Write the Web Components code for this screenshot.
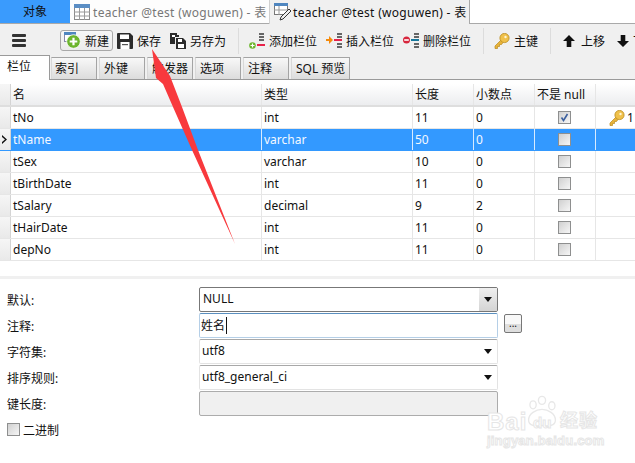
<!DOCTYPE html>
<html>
<head>
<meta charset="utf-8">
<style>
  html, body { margin: 0; height: 463px; overflow: hidden; background: #fff; }
  body { position: relative; font: 12px "Noto Sans", "Noto Sans CJK SC", sans-serif; color: #111; }
</style>
</head>
<body>
<nav-tabs></nav-tabs>
<tool-bar></tool-bar>
<sub-tabs></sub-tabs>
<field-grid></field-grid>
<field-form></field-form>
<red-arrow></red-arrow>
<baidu-mark></baidu-mark>

<script>
const FONT = '"Noto Sans", "Noto Sans CJK SC", sans-serif';

const ICONS = {
  table: `<svg width="16" height="16" viewBox="0 0 16 16"><rect x=".5" y=".5" width="15" height="15" fill="#fff" stroke="#8a8a8a"/><rect x="0" y="0" width="16" height="4" fill="#5b8ec4"/><path d="M0 8h16M0 12h16M5.5 4v12M10.5 4v12" stroke="#9a9a9a"/></svg>`,
  tableEdit: `<svg width="18" height="18" viewBox="0 0 18 18"><rect x=".5" y=".5" width="13" height="11" fill="#fff" stroke="#777"/><rect x="0" y="0" width="14" height="3" fill="#4f86bf"/><path d="M0 7h14M5 3v9" stroke="#999"/><path d="M15 6l2 2-8 8-3 1 1-3z" fill="#eee" stroke="#333"/></svg>`,
  menu: `<svg width="14" height="13" viewBox="0 0 14 13"><g fill="#333"><rect width="14" height="3" rx="1"/><rect y="5" width="14" height="3" rx="1"/><rect y="10" width="14" height="3" rx="1"/></g></svg>`,
  add: `<svg width="17" height="17" viewBox="0 0 17 17"><rect x=".5" y=".5" width="11" height="9" fill="#fff" stroke="#88a"/><rect width="12" height="3" fill="#4f86bf"/><circle cx="9.5" cy="9.5" r="6.8" fill="#6cb52d" stroke="#fff" stroke-width=".8"/><path d="M9.5 5.7v7.6M5.7 9.5h7.6" stroke="#fff" stroke-width="2.2"/></svg>`,
  save: `<svg width="16" height="16" viewBox="0 0 16 16"><path d="M1 0h12l3 3v12a1 1 0 0 1-1 1H1a1 1 0 0 1-1-1V1a1 1 0 0 1 1-1z" fill="#2b2b2b"/><rect x="3" y="1.5" width="9" height="4.5" fill="#fff"/><rect x="3.5" y="9" width="9" height="7" fill="#fff"/><rect x="5" y="11" width="6" height="1.2" fill="#555"/></svg>`,
  saveAs: `<svg width="16" height="16" viewBox="0 0 16 16"><path d="M0 0h7v2h2v2H5v7H0z" fill="#2b2b2b"/><rect x="2" y="2" width="3" height="2" fill="#fff"/><path d="M6 5h7l3 3v8H6z" fill="#2b2b2b"/><rect x="8" y="6" width="4" height="3" fill="#fff"/><rect x="8" y="11" width="6" height="4" fill="#fff"/></svg>`,
  colAdd: `<svg width="16" height="16" viewBox="0 0 16 16"><g fill="#666"><rect x="10" y="0" width="5" height="2"/><rect x="10" y="3" width="5" height="2"/><rect x="10" y="6" width="5" height="2"/></g><rect x="8" y="11" width="8" height="2" fill="#e8224a"/><circle cx="3.5" cy="12.5" r="3.3" fill="#6cb52d"/><path d="M3.5 10.5v4M1.5 12.5h4" stroke="#fff" stroke-width="1.2"/></svg>`,
  colInsert: `<svg width="16" height="16" viewBox="0 0 16 16"><g fill="#666"><rect x="11" y="0" width="5" height="2"/><rect x="11" y="3" width="5" height="2"/><rect x="11" y="10" width="5" height="2"/><rect x="11" y="13" width="5" height="2"/></g><rect x="8" y="6" width="8" height="2" fill="#e8224a"/><path d="M0 6h3V3l4 4-4 4V8H0z" fill="#f58a0b"/></svg>`,
  colDel: `<svg width="16" height="16" viewBox="0 0 16 16"><g fill="#666"><rect x="11" y="0" width="5" height="2"/><rect x="11" y="3" width="5" height="2"/><rect x="11" y="10" width="5" height="2"/><rect x="11" y="13" width="5" height="2"/></g><rect x="8" y="6" width="8" height="2" fill="#17779b"/><circle cx="3.5" cy="7" r="3.5" fill="#d7263d"/><rect x="1.2" y="6.2" width="4.6" height="1.6" fill="#fff"/></svg>`,
  key: `<svg width="16" height="16" viewBox="0 0 16 16"><path d="M7.5 6.5L1 13v2.5h2.5v-2h2v-2h2l1.5-2" fill="#e8b33a" stroke="#b98a1c" stroke-width=".7"/><circle cx="10.5" cy="5" r="4.6" fill="#f0c14b" stroke="#b98a1c" stroke-width=".8"/><circle cx="11.5" cy="4" r="1.2" fill="#fff6d5"/></svg>`,
  up: `<svg width="12" height="12" viewBox="0 0 12 12"><path d="M6 0l6 6H8.3v6H3.7V6H0z" fill="#111"/></svg>`,
  down: `<svg width="12" height="12" viewBox="0 0 12 12"><path d="M6 12L0 6h3.7V0h4.6v6H12z" fill="#111"/></svg>`,
};

class NavTabs extends HTMLElement {
  constructor() {
    super();
    this.attachShadow({ mode: 'open' }).innerHTML = `
      <style>
        :host { display: flex; height: 24px; box-sizing: border-box; border-bottom: 1px solid #a9a9a9; background: #fff; font-family: ${FONT}; }
        div { display: flex; align-items: center; box-sizing: border-box; height: 23px; white-space: nowrap; }
        span { letter-spacing: .3px; }
        .obj { width: 70px; background: #3a9bfd; justify-content: center; color: #111; padding-bottom: 2px; }
        .idle { width: 199px; padding-left: 4px; gap: 3px; color: #777; background: #fdfdfd; }
        .cur { width: 201px; height: 24px; padding-left: 4px; gap: 1px; background: #f0f0f0; color: #111; border-right: 1px solid #a9a9a9; border-left: 1px solid #d0d0d0; }
      </style>
      <div class="obj">对象</div>
      <div class="idle">${ICONS.table}<span>teacher @test (woguwen) - 表</span></div>
      <div class="cur">${ICONS.tableEdit}<span>teacher @test (woguwen) - 表</span></div>`;
  }
}

class ToolBtn extends HTMLElement {
  constructor() {
    super();
    this.attachShadow({ mode: 'open' }).innerHTML = `
      <style>
        :host { display: flex; align-items: center; gap: 4px; height: 21px; white-space: nowrap; flex: none; }
        :host([on]) { box-sizing: border-box; border: 1px solid #a8a8a8; border-radius: 3px; background: linear-gradient(#f7f7f7, #ebebeb); padding: 0 3px; }
        svg { display: block; }
      </style>
      <span id="ic" style="display:contents"></span><slot></slot>`;
  }
  connectedCallback() {
    this.shadowRoot.getElementById('ic').innerHTML = ICONS[this.getAttribute('icon')] || '';
  }
}

class ToolBar extends HTMLElement {
  constructor() {
    super();
    this.attachShadow({ mode: 'open' }).innerHTML = `
      <style>
        :host { display: flex; align-items: center; height: 31px; box-sizing: border-box; padding: 2px 0 0 12px; background: #f0f0f0; overflow: hidden; font-family: ${FONT}; }
        .menu { margin-right: 34px; display: flex; }
        .sep { width: 1px; height: 26px; background: #dcdcdc; flex: none; }
      </style>
      <span class="menu">${ICONS.menu}</span>
      <tool-btn icon="add" on style="width:53px">新建</tool-btn>
      <tool-btn icon="save" style="margin-left:4px">保存</tool-btn>
      <tool-btn icon="saveAs" style="margin-left:9px">另存为</tool-btn>
      <span class="sep" style="margin-left:12px"></span>
      <tool-btn icon="colAdd" style="margin-left:10px">添加栏位</tool-btn>
      <tool-btn icon="colInsert" style="margin-left:9px">插入栏位</tool-btn>
      <tool-btn icon="colDel" style="margin-left:9px">删除栏位</tool-btn>
      <span class="sep" style="margin-left:12px"></span>
      <tool-btn icon="key" style="margin-left:10px">主键</tool-btn>
      <span class="sep" style="margin-left:12px"></span>
      <tool-btn icon="up" style="margin-left:12px;gap:6px">上移</tool-btn>
      <tool-btn icon="down" style="margin-left:12px;gap:4px">下移</tool-btn>`;
  }
}

class SubTabs extends HTMLElement {
  constructor() {
    super();
    const tabs = ['索引', '外键', '触发器', '选项', '注释', 'SQL 预览'];
    this.attachShadow({ mode: 'open' }).innerHTML = `
      <style>
        :host { display: flex; gap: 2px; height: 25px; box-sizing: border-box; background: #f0f0f0; border-bottom: 1px solid #9a9a9a; font-family: ${FONT}; }
        div { box-sizing: border-box; width: 46px; height: 22px; margin-top: 2px; line-height: 21px; padding-left: 4px; white-space: nowrap;
              border: 1px solid #a4a4a4; border-bottom: 0; border-left-color: #d8d8d8; background: linear-gradient(#f8f8f8, #dcdcdc); }
        .on { width: 50px; height: 25px; margin: 0 -1px 0 0; padding-left: 7px; background: #fff; border: 1px solid #9a9a9a; border-width: 1px 1px 0 0; line-height: 22px; position: relative; }
        .idx { padding-left: 3px; }
        .sql { width: 59px; }
      </style>
      <div class="on">栏位</div>
      ${tabs.map((t, i) => `<div class="${t.startsWith('SQL') ? 'sql' : ''} ${i === 0 ? 'idx' : ''}">${t}</div>`).join('')}`;
  }
}

class FieldGrid extends HTMLElement {
  constructor() {
    super();
    const filas = [
      ['tNo', 'int', '11', '0', true, true],
      ['tName', 'varchar', '50', '0'],
      ['tSex', 'varchar', '10', '0'],
      ['tBirthDate', 'int', '11', '0'],
      ['tSalary', 'decimal', '9', '2'],
      ['tHairDate', 'int', '11', '0'],
      ['depNo', 'int', '11', '0'],
    ];
    const check = (on) => `<i class="chk">${on ? '<svg width="9" height="9" viewBox="0 0 9 9"><path d="M1.5 4.5l2 3 4-6.5" fill="none" stroke="#3b5f9e" stroke-width="1.6"/></svg>' : ''}</i>`;
    this.attachShadow({ mode: 'open' }).innerHTML = `
      <style>
        :host { display: block; padding-top: 4px; background: #fff; font-family: ${FONT}; }
        .r { display: grid; grid-template-columns: 11px 251px 151px 61px 61px 61px 1fr; height: 22px; box-sizing: border-box; border-bottom: 1px solid #e6e6e6; }
        .r > div { box-sizing: border-box; padding-left: 2px; line-height: 21px; border-right: 1px solid #e6e6e6; white-space: nowrap; overflow: hidden; }
        .r > div:last-child { border-right: 0; }
        .r > .h { padding: 0; background: linear-gradient(#f6f6f6, #e9e9e9); border-right: 1px solid #d4d4d4; position: relative; }
        .head { height: 23px; background: linear-gradient(#fff, #ecedef); border-bottom: 2px solid #dedede; }
        .head > div { line-height: 22px; }
        .sel { background: #3399ff; color: #f4f8ff; border-bottom-color: #3399ff; }
        .sel > div { border-right-color: #d8ebff; }
        .sel > .h { color: #111; }
        .c { display: flex; align-items: center; justify-content: center; padding: 0 2px 0 0 !important; }
        .chk { display: flex; align-items: center; justify-content: center; box-sizing: border-box; width: 13px; height: 13px; border: 1px solid #8e8f8f; background: linear-gradient(135deg, #d0d0d0, #f6f6f6); }
        .k { display: flex; align-items: center; padding-left: 13px !important; gap: 2px; }
        .arrow { position: absolute; left: 1px; top: 6px; }
      </style>
      <div class="r head"><div class="h"></div><div>名</div><div>类型</div><div>长度</div><div>小数点</div><div>不是 null</div><div></div></div>
      ${filas.map((f, i) => `
        <div class="r ${i === 1 ? 'sel' : ''}">
          <div class="h">${i === 1 ? '<svg class="arrow" width="7" height="9" viewBox="0 0 7 9"><path d="M1 0l5 4.5L1 9V7l3-2.5L1 2z" fill="#111"/></svg>' : ''}</div>
          <div>${f[0]}</div><div>${f[1]}</div><div>${f[2]}</div><div>${f[3]}</div>
          <div class="c">${check(f[4])}</div>
          <div class="${f[5] ? 'k' : ''}">${f[5] ? ICONS.key + '<span>1</span>' : ''}</div>
        </div>`).join('')}`;
  }
}

class FormRow extends HTMLElement {
  constructor() {
    super();
    this.attachShadow({ mode: 'open' }).innerHTML = `
      <style>
        :host { display: grid; grid-template-columns: 192px 299px auto; height: 25px; margin-bottom: 1px; align-items: center; font-family: ${FONT}; }
        .box { box-sizing: border-box; height: 25px; border: 1px solid #acacac; border-color: #a8a8a8 #e3e3e3 #e3e3e3; border-radius: 2px; padding-left: 2px; line-height: 22px; position: relative; background: #fff; }
        :host([kind="drop"]) .box { border: 1.5px solid #777; padding-left: 3px; }
        :host([kind="focus"]) .box { border-color: #5a8fbf #b5cfe7 #b5cfe7; padding-left: 1px; line-height: 23px; }
        :host([kind="off"]) .box { background: #f0f0f0; border: 1px solid #acacac; }
        .btn { display: none; position: absolute; right: 0; top: 0; bottom: 0; width: 18px; }
        :host([arrow]) .btn { display: block; }
        :host([kind="drop"]) .btn { background: linear-gradient(#efefef, #d4d4d4); }
        .btn::after { content: ""; position: absolute; left: 5px; top: 9px; border: 4px solid transparent; border-top: 5px solid #111; border-bottom: 0; }
        .more { display: none; box-sizing: border-box; width: 18px; height: 19px; margin: -4px 0 0 6px; border: 1px solid #777; border-radius: 2px; background: linear-gradient(#f8f8f8 50%, #dedede 50%); font-size: 10px; line-height: 16px; text-align: center; }
        :host([more]) .more { display: block; }
        .caret { border-left: 1px solid #111; margin-left: 1px; }
      </style>
      <span><slot name="label"></slot></span>
      <div class="box"><slot></slot><span class="caret" id="c" hidden></span><i class="btn"></i></div>
      <div class="more">...</div>`;
  }
  connectedCallback() {
    if (this.hasAttribute('more')) this.shadowRoot.getElementById('c').hidden = false;
  }
}

class FieldForm extends HTMLElement {
  constructor() {
    super();
    this.attachShadow({ mode: 'open' }).innerHTML = `
      <style>
        :host { display: block; margin-top: 15px; border-top: 3px solid #f0f0f0; padding: 8px 0 0 7px; font-family: ${FONT}; }
        .bin { display: flex; align-items: center; gap: 3px; height: 15px; margin-top: 6px; }
        .bin i { box-sizing: border-box; width: 13px; height: 13px; border: 1px solid #8e8f8f; background: linear-gradient(135deg, #d0d0d0, #f6f6f6); }
      </style>
      <form-row kind="drop" arrow><span slot="label">默认:</span>NULL</form-row>
      <form-row kind="focus" more><span slot="label">注释:</span>姓名</form-row>
      <form-row arrow><span slot="label">字符集:</span>utf8</form-row>
      <form-row arrow><span slot="label">排序规则:</span>utf8_general_ci</form-row>
      <form-row kind="off"><span slot="label">键长度:</span></form-row>
      <div class="bin"><i></i>二进制</div>`;
  }
}

// flecha roja dibujada encima de la captura
class RedArrow extends HTMLElement {
  constructor() {
    super();
    this.attachShadow({ mode: 'open' }).innerHTML = `
      <style>:host { position: absolute; left: 0; top: 0; pointer-events: none; }</style>
      <svg width="635" height="463" style="display:block">
        <path d="M152 49L170 76 182 107 198 150 235 244 192 150 173 107 163 84 156 78z" fill="#f8393d"/>
      </svg>`;
  }
}

class BaiduMark extends HTMLElement {
  constructor() {
    super();
    this.attachShadow({ mode: 'open' }).innerHTML = `
      <style>
        :host { position: absolute; left: 487px; top: 394px; width: 120px; height: 58px; color: #fff; font-family: "Liberation Sans", "Noto Sans CJK SC", sans-serif; pointer-events: none; }
        span { position: absolute; white-space: nowrap; font-weight: bold; line-height: 1; -webkit-text-stroke: 1px #e6e6e6; }
        svg { position: absolute; left: 38px; top: 0; }
      </style>
      <svg width="34" height="36" viewBox="0 0 38 36"><g fill="none" stroke="#e8e8e8" stroke-width="1.5"><ellipse cx="9" cy="10" rx="3.5" ry="4.5"/><ellipse cx="19" cy="5" rx="4" ry="4.5"/><ellipse cx="30" cy="11" rx="3.5" ry="4.5"/><path d="M4 27c0-7 8-12 15-12s15 5 15 12c0 7-8 7-15 6-7 1-15 1-15-6z"/></g></svg>
      <span style="left:0;top:16px;font-size:24px;letter-spacing:1px">Bai</span>
      <span style="left:46px;top:21px;font-size:15px">du</span>
      <span style="left:73px;top:18px;font-size:18px;letter-spacing:1px">经验</span>
      <span style="left:0;top:40px;font-size:13px;letter-spacing:.2px">jingyan.baidu.com</span>`;
  }
}

customElements.define('nav-tabs', NavTabs);
customElements.define('tool-btn', ToolBtn);
customElements.define('tool-bar', ToolBar);
customElements.define('sub-tabs', SubTabs);
customElements.define('field-grid', FieldGrid);
customElements.define('form-row', FormRow);
customElements.define('field-form', FieldForm);
customElements.define('red-arrow', RedArrow);
customElements.define('baidu-mark', BaiduMark);
</script>
</body>
</html>
